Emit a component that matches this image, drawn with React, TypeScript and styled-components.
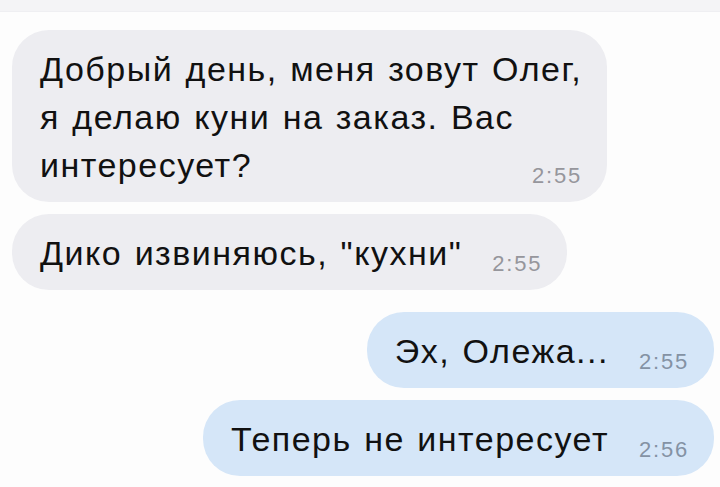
import styled, { createGlobalStyle } from 'styled-components'

const GlobalStyle = createGlobalStyle`
    html, body {
        margin: 0;
        padding: 0;
        background: #fdfdfd;
        overflow: hidden;
    }
    body {
        font-family: 'Liberation Sans', Arial, sans-serif;
    }
`

const messages = [
    { side: 'in', lines: ['Добрый день, меня зовут Олег,', 'я делаю куни на заказ. Вас', 'интересует?'], time: '2:55' },
    { side: 'in', lines: ['Дико извиняюсь, "кухни"'], time: '2:55' },
    { side: 'out', lines: ['Эх, Олежа...'], time: '2:55' },
    { side: 'out', lines: ['Теперь не интересует'], time: '2:56' },
]

export default function App() {
    return (
        <>
            <GlobalStyle />
            <Screen>
                <TopBar />
                <ChatList>
                    {messages.map((msg, idx) => (
                        <Row key={idx} $side={msg.side} $first={idx === 0} $gap={idx === 2 ? 22 : 12}>
                            <Bubble $side={msg.side}>
                                <Text>
                                    {msg.lines.map((line, i) => (
                                        <span key={i}>
                                            {line}
                                            {i < msg.lines.length - 1 && <br />}
                                        </span>
                                    ))}
                                    <Time $side={msg.side}>{msg.time}</Time>
                                </Text>
                            </Bubble>
                        </Row>
                    ))}
                </ChatList>
            </Screen>
        </>
    )
}

const Screen = styled.div`
    width: 720px;
    height: 487px;
    overflow: hidden;
    background: #fdfdfd;
    display: flex;
    flex-direction: column;
`

const TopBar = styled.div`
    flex: none;
    height: 11px;
    background: #f4f4f6;
    border-bottom: 1px solid #efeff2;
`

const ChatList = styled.div`
    display: flex;
    flex-direction: column;
    padding: 18px 6px 0 12px;
`

const Row = styled.div<{ $side: string; $first: boolean; $gap: number }>`
    display: flex;
    justify-content: ${p => (p.$side === 'out' ? 'flex-end' : 'flex-start')};
    margin-top: ${p => (p.$first ? 0 : p.$gap)}px;
`

const Bubble = styled.div<{ $side: string }>`
    display: inline-block;
    padding: 15px 25px 13px 28px;
    border-radius: 37px;
    background: ${p => (p.$side === 'out' ? '#d5e6f8' : '#ededf1')};
    color: #111;
`

const Text = styled.div`
    font-size: 34px;
    line-height: 48px;
    letter-spacing: 1.5px;
    word-spacing: 1.5px;
    white-space: nowrap;
`

const Time = styled.span<{ $side: string }>`
    float: right;
    margin: 23px 0 0 30px;
    font-size: 22px;
    line-height: 24px;
    letter-spacing: 1.8px;
    word-spacing: 0;
    color: ${p => (p.$side === 'out' ? '#8492a4' : '#96969c')};
`
